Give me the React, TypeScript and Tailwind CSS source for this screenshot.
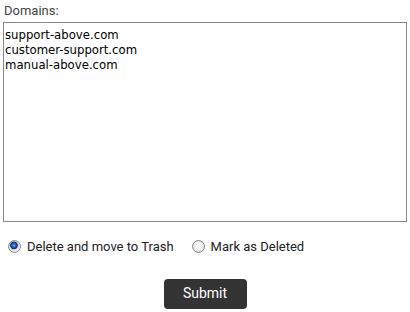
import { useState } from 'react';

const radioClass =
  'm-0 h-[13px] w-[13px] shrink-0 appearance-none rounded-full border border-[#8a8a8a] bg-[radial-gradient(circle_at_50%_45%,#ffffff_0,#f0f0f0_45%,#d4d4d4_100%)] checked:bg-[radial-gradient(circle_at_45%_40%,#6fa3e8_0,#2b64c4_20%,#0f2f6e_38%,#c8c8c8_46%,#f2f2f2_60%,#d0d0d0_100%)]';

export default function App() {
  const [mode, setMode] = useState('trash');

  return (
    <div className="w-[410px] h-[312px] bg-white" style={{ fontFamily: 'Roboto, "Liberation Sans", sans-serif' }}>
      <div className="px-[3px] pt-[2px]">
        <label className="block pl-px text-[13px] leading-[17px] text-[#444]">Domains:</label>
        <textarea
          className="mt-[3px] block w-[404px] h-[200px] resize-none border border-[#888] px-[1px] pt-[4px] pb-[2px] text-[13px] leading-[15px] text-black outline-none"
          style={{ fontFamily: '"DejaVu Sans Condensed", "DejaVu Sans", sans-serif' }}
          defaultValue={'support-above.com\ncustomer-support.com\nmanual-above.com'}
        />
        <div className="mt-[15px] flex items-center pl-[5px] text-[13px] text-[#222]">
          <label className="flex items-center gap-[6px]">
            <input
              type="radio"
              name="mode"
              checked={mode === 'trash'}
              onChange={() => setMode('trash')}
              className={radioClass}
            />
            Delete and move to Trash
          </label>
          <label className="ml-[18px] flex items-center gap-[6px]">
            <input
              type="radio"
              name="mode"
              checked={mode === 'deleted'}
              onChange={() => setMode('deleted')}
              className={radioClass}
            />
            Mark as Deleted
          </label>
        </div>
        <div className="mt-[22px] flex justify-center">
          <button className="h-[30px] w-[83px] rounded-[4px] bg-[#333] text-[14px] text-white">Submit</button>
        </div>
      </div>
    </div>
  );
}
